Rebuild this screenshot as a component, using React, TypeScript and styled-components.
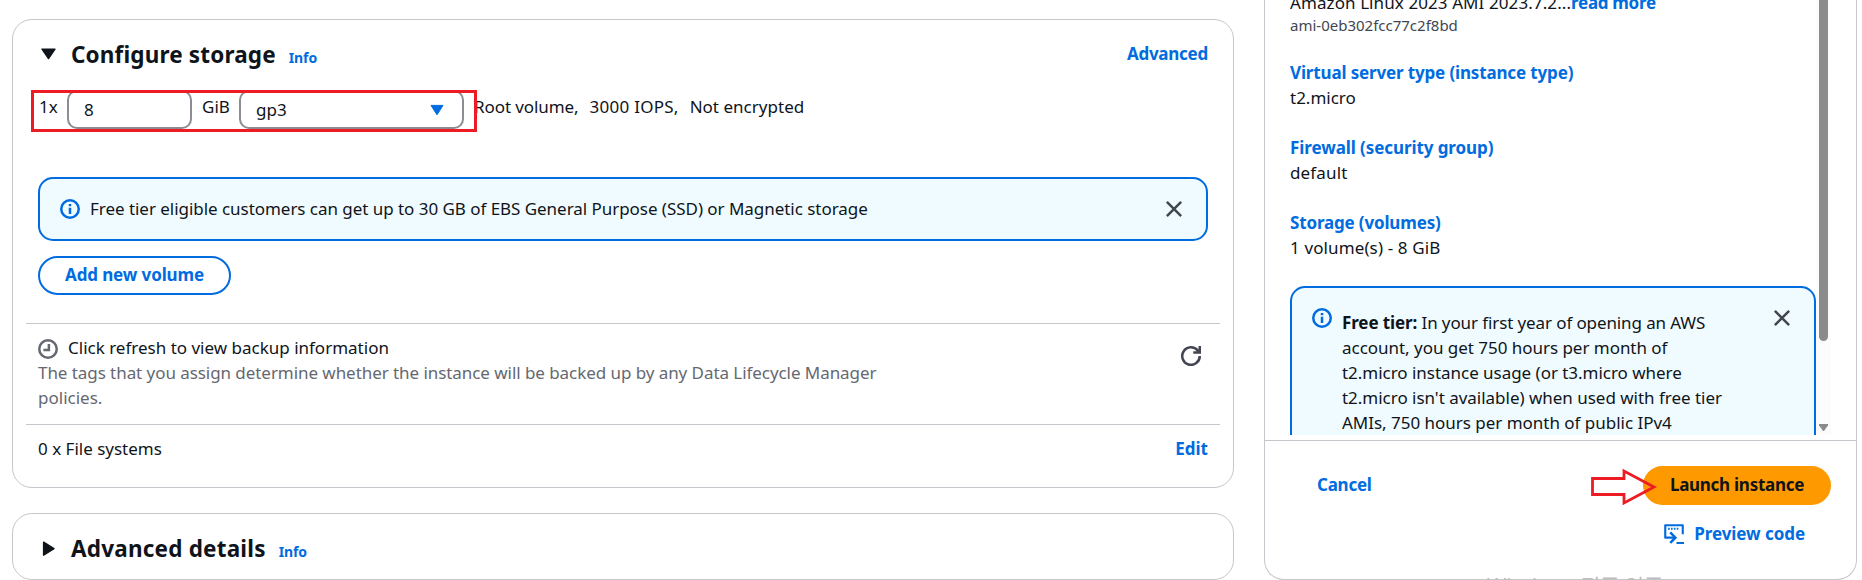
import React from "react";
import styled, { createGlobalStyle } from "styled-components";

const color = {
  text: "#0f141a",
  secondary: "#656871",
  muted: "#424650",
  link: "#006ce0",
  border: "#c6c6cd",
  field: "#8c8c94",
  infoBg: "#f0fbff",
  primary: "#ff9900",
  mark: "#ed1c24",
};

const GlobalStyle = createGlobalStyle`
  *, *::before, *::after { box-sizing: border-box; }
  body {
    margin: 0;
    background: #fff;
    color: ${color.text};
    font: 400 17px/25px "Noto Sans", "Noto Sans CJK KR", sans-serif;
  }
`;

const Page = styled.div`
  position: relative;
  display: flex;
  gap: 30px;
  width: 1862px;
  height: 580px;
  padding-left: 12px;
  overflow: hidden;
`;

const MainColumn = styled.main`
  display: flex;
  flex-direction: column;
  gap: 25px;
  width: 1222px;
  padding-top: 19px;
`;

const Card = styled.section<{ $height: number }>`
  flex: none;
  height: ${(p) => p.$height}px;
  padding: 19px 25px 0;
  border: 1px solid ${color.border};
  border-radius: 20px;
  background: #fff;
`;

const CardHeader = styled.header`
  display: flex;
  align-items: center;
  height: 30px;
`;

const HeaderIcon = styled.svg`
  flex: none;
  width: 20px;
  height: 20px;
  margin-right: 13px;
  fill: ${color.text};
  stroke: ${color.text};
  stroke-width: 1.4;
  stroke-linejoin: round;
`;

const Title = styled.h2<{ $track?: number }>`
  margin: 0;
  padding-top: 2px;
  font-size: 22.5px;
  font-weight: 700;
  line-height: 30px;
  letter-spacing: ${(p) => p.$track ?? 0}px;
`;

const InfoLink = styled.a`
  margin: 8px 0 0 13px;
  color: ${color.link};
  font-size: 14px;
  font-weight: 700;
  line-height: 20px;
  letter-spacing: -0.1px;
`;

const Text = styled.span<{ $track?: number }>`
  white-space: pre;
  letter-spacing: ${(p) => p.$track ?? 0}px;
`;

const Link = styled.a<{ $track?: number }>`
  color: ${color.link};
  font-weight: 700;
  white-space: nowrap;
  letter-spacing: ${(p) => p.$track ?? 0}px;
`;

const HeaderAction = styled(Link)`
  margin-left: auto;
  padding-bottom: 2px;
`;

const VolumeRow = styled.div`
  position: relative;
  display: flex;
  align-items: flex-start;
  height: 39px;
  margin-top: 21px;
`;

const VolumeLabel = styled.span<{ $width: number; $indent?: number }>`
  width: ${(p) => p.$width}px;
  padding: 4px 0 0 ${(p) => p.$indent ?? 0}px;
`;

const Field = styled.div<{ $width: number }>`
  display: flex;
  align-items: center;
  justify-content: space-between;
  width: ${(p) => p.$width}px;
  height: 39px;
  padding: 0 18px 0 15px;
  border: 2px solid ${color.field};
  border-radius: 10px;
`;

const Caret = styled.svg`
  width: 14px;
  height: 12px;
  fill: ${color.link};
  stroke: ${color.link};
  stroke-width: 1;
  stroke-linejoin: round;
`;

const VolumeFacts = styled.div`
  display: flex;
  gap: 11px;
  padding: 4px 0 0 10px;
`;

const Highlight = styled.div`
  position: absolute;
  top: 0;
  left: -7px;
  width: 446px;
  height: 42px;
  border: 3px solid ${color.mark};
`;

const Alert = styled.div`
  display: flex;
  align-items: center;
  gap: 10px;
  height: 64px;
  margin-top: 48px;
  padding: 0 22px 0 20px;
  border: 2px solid ${color.link};
  border-radius: 15px;
  background: ${color.infoBg};
`;

const SummaryAlert = styled(Alert)`
  flex: none;
  align-items: flex-start;
  height: 260px;
  margin-top: 26px;
  padding-top: 20px;
`;

const AlertBody = styled.div`
  flex: 1;
  padding-bottom: 2px;
`;

const SummaryAlertBody = styled(AlertBody)`
  display: flex;
  flex-direction: column;
  padding-top: 2px;
`;

const Icon = styled.svg<{ $color: string }>`
  flex: none;
  width: 20px;
  height: 20px;
  fill: none;
  stroke: ${(p) => p.$color};
  stroke-width: 2;
`;

const PillButton = styled.button<{ $primary?: boolean; $width: number; $track: number }>`
  width: ${(p) => p.$width}px;
  height: 39px;
  padding: 0 0 2px;
  border: 2px solid ${(p) => (p.$primary ? color.primary : color.link)};
  border-radius: 20px;
  background: ${(p) => (p.$primary ? color.primary : "#fff")};
  color: ${(p) => (p.$primary ? color.text : color.link)};
  font: inherit;
  font-weight: 700;
  letter-spacing: ${(p) => p.$track}px;
`;

const ButtonRow = styled.div`
  display: flex;
  margin-top: 15px;
`;

const Divider = styled.hr<{ $top: number }>`
  height: 1px;
  margin: ${(p) => p.$top}px -12px 11px;
  border: 0;
  background: ${color.border};
`;

const BackupRow = styled.div`
  display: flex;
  justify-content: space-between;
  padding-right: 7px;
`;

const BackupText = styled.div`
  display: flex;
  flex-direction: column;
  color: ${color.secondary};
`;

const BackupStatus = styled.div`
  display: flex;
  gap: 10px;
  color: ${color.text};

  ${Icon} {
    margin-top: 4px;
  }
`;

const RefreshButton = styled.span`
  padding-top: 11px;
  line-height: 0;
`;

const SplitRow = styled.div`
  display: flex;
  justify-content: space-between;
`;

const Panel = styled.aside`
  display: flex;
  flex-direction: column;
  width: 593px;
  height: 580px;
  border: 1px solid ${color.border};
  border-top: 0;
  border-radius: 0 0 20px 20px;
`;

const ScrollArea = styled.div`
  display: flex;
  height: 435px;
  padding: 0 25px;
  overflow: hidden;
`;

const Summary = styled.div`
  display: flex;
  flex-direction: column;
  width: 526px;
  margin-top: -10px;
`;

const SummaryItem = styled.div`
  display: flex;
  flex: none;
  flex-direction: column;
  margin-bottom: 25px;

  &:nth-last-child(2) {
    margin-bottom: 0;
  }
`;

const AmiId = styled.span`
  color: ${color.muted};
  font-size: 15px;
  line-height: 20px;
`;

const ScrollTrack = styled.div`
  display: flex;
  flex-direction: column;
  align-items: center;
  justify-content: space-between;
  width: 15px;
  height: 435px;
  background: #fcfcfc;
`;

const ScrollThumb = styled.div`
  width: 9px;
  height: 341px;
  border-radius: 0 0 5px 5px;
  background: #8b8b8b;
`;

const ScrollArrow = styled.svg`
  width: 9px;
  height: 7px;
  margin-bottom: 4px;
  fill: #8b8b8b;
`;

const Footer = styled.footer`
  display: flex;
  flex-direction: column;
  margin-top: 5px;
  padding: 25px 25px 0;
  border-top: 1px solid ${color.border};
`;

const FooterActions = styled.div`
  display: flex;
  align-items: center;
  justify-content: space-between;
  padding-left: 27px;

  > a {
    padding-bottom: 2px;
  }
`;

const PreviewLink = styled(Link)`
  display: flex;
  align-items: center;
  align-self: flex-end;
  gap: 10px;
  margin: 16px 26px 0 0;
`;

const ArrowMark = styled.svg`
  position: absolute;
  top: 465px;
  left: 1588px;
  width: 72px;
  height: 44px;
  fill: none;
  stroke: ${color.mark};
  stroke-width: 2.8;
`;

const Watermark = styled.div`
  position: absolute;
  top: 571px;
  left: 1487px;
  color: #bdbdbd;
  font: 400 21px/30px "Open Sans", "Noto Sans CJK KR", sans-serif;
  letter-spacing: -0.1px;
  white-space: nowrap;
`;

const InfoIcon = () => (
  <Icon viewBox="0 0 16 16" $color={color.link}>
    <circle cx="8" cy="8" r="7" />
    <path d="M8 4v1.8M8 7v4.9" />
  </Icon>
);

const CloseIcon = () => (
  <Icon viewBox="0 0 16 16" $color={color.muted}>
    <path d="M2.3 2.3l11.4 11.4M13.7 2.3L2.3 13.7" />
  </Icon>
);

const freeTierLines = [
  { text: "account, you get 750 hours per month of", track: -0.03 },
  { text: "t2.micro instance usage (or t3.micro where", track: -0.03 },
  { text: "t2.micro isn't available) when used with free tier", track: -0.02 },
  { text: "AMIs, 750 hours per month of public IPv4", track: -0.02 },
];

const summaryItems = [
  { label: "Virtual server type (instance type)", value: "t2.micro", labelTrack: -0.15, valueTrack: 0 },
  { label: "Firewall (security group)", value: "default", labelTrack: -0.08, valueTrack: 0.15 },
  { label: "Storage (volumes)", value: "1 volume(s) - 8 GiB", labelTrack: -0.16, valueTrack: 0.12 },
];

export default function App() {
  return (
    <>
      <GlobalStyle />
      <Page>
        <MainColumn>
          <Card $height={469}>
            <CardHeader>
              <HeaderIcon viewBox="0 0 20 20">
                <path d="M4 5.2h13L10.500 14.6z" />
              </HeaderIcon>
              <Title $track={0.15}>Configure storage</Title>
              <InfoLink>Info</InfoLink>
              <HeaderAction $track={-0.25}>Advanced</HeaderAction>
            </CardHeader>
            <VolumeRow>
              <VolumeLabel $width={29} $indent={1}>1x</VolumeLabel>
              <Field $width={125}>8</Field>
              <VolumeLabel $width={47} $indent={10}>GiB</VolumeLabel>
              <Field $width={225}>
                gp3
                <Caret viewBox="0 0 14 12">
                  <path d="M1 1.4h12L7 10.8z" />
                </Caret>
              </Field>
              <VolumeFacts>
                <Text $track={-0.08}>Root volume,</Text>
                <Text $track={0.25}>3000 IOPS,</Text>
                <Text $track={0.02}>Not encrypted</Text>
              </VolumeFacts>
              <Highlight />
            </VolumeRow>
            <Alert>
              <InfoIcon />
              <AlertBody>
                <Text $track={-0.04}>
                  Free tier eligible customers can get up to 30 GB of EBS General Purpose (SSD) or Magnetic storage
                </Text>
              </AlertBody>
              <CloseIcon />
            </Alert>
            <ButtonRow>
              <PillButton $width={193} $track={-0.12}>Add new volume</PillButton>
            </ButtonRow>
            <Divider $top={28} />
            <BackupRow>
              <BackupText>
                <BackupStatus>
                  <Icon viewBox="0 0 16 16" $color={color.secondary}>
                    <circle cx="8" cy="8" r="7" />
                    <path d="M8.7 4v4.8H4.3" />
                  </Icon>
                  <Text>Click refresh to view backup information</Text>
                </BackupStatus>
                <Text $track={-0.06}>
                  The tags that you assign determine whether the instance will be backed up by any Data Lifecycle Manager
                </Text>
                <Text>policies.</Text>
              </BackupText>
              <RefreshButton>
                <Icon viewBox="0 0 16 16" $color={color.muted}>
                  <path d="M15 8a7 7 0 1 1-1.6-4.4l1 1.2M9.8 5.1H15V0" />
                </Icon>
              </RefreshButton>
            </BackupRow>
            <Divider $top={14} />
            <SplitRow>
              <Text>0 x File systems</Text>
              <Link>Edit</Link>
            </SplitRow>
          </Card>
          <Card $height={67}>
            <CardHeader>
              <HeaderIcon viewBox="0 0 20 20">
                <path d="M5.6 4.2v13L16 10.7z" />
              </HeaderIcon>
              <Title $track={0.2}>Advanced details</Title>
              <InfoLink>Info</InfoLink>
            </CardHeader>
          </Card>
        </MainColumn>

        <Panel>
          <ScrollArea>
            <Summary>
              <SummaryItem>
                <div>
                  <Text $track={0.09}>Amazon Linux 2023 AMI 2023.7.2...</Text>
                  <Link $track={-0.3}>read more</Link>
                </div>
                <AmiId>ami-0eb302fcc77c2f8bd</AmiId>
              </SummaryItem>
              {summaryItems.map((item) => (
                <SummaryItem key={item.label}>
                  <Link $track={item.labelTrack}>{item.label}</Link>
                  <Text $track={item.valueTrack}>{item.value}</Text>
                </SummaryItem>
              ))}
              <SummaryAlert>
                <InfoIcon />
                <SummaryAlertBody>
                  <Text $track={-0.11}>
                    <strong>Free tier:</strong> In your first year of opening an AWS
                  </Text>
                  {freeTierLines.map((line) => (
                    <Text key={line.text} $track={line.track}>{line.text}</Text>
                  ))}
                </SummaryAlertBody>
                <CloseIcon />
              </SummaryAlert>
            </Summary>
            <ScrollTrack>
              <ScrollThumb />
              <ScrollArrow viewBox="0 0 9 7">
                <path d="M0 0h9v1.2L5 7H4L0 1.2z" />
              </ScrollArrow>
            </ScrollTrack>
          </ScrollArea>
          <Footer>
            <FooterActions>
              <Link $track={-0.25}>Cancel</Link>
              <PillButton $primary $width={188} $track={-0.27}>Launch instance</PillButton>
            </FooterActions>
            <PreviewLink $track={-0.06}>
              <Icon viewBox="0 0 16 16" $color={color.link}>
                <path d="M9 10.9H1V1h14v7.1" strokeWidth="1.7" strokeLinejoin="round" />
                <path d="M5 6.7l4.1 4.2L5 15.1" />
                <path d="M10 15.2h6" strokeWidth="1.6" />
                <path d="M3.3 3.8h8.2" strokeWidth="1.5" strokeDasharray="1.3 1" />
              </Icon>
              Preview code
            </PreviewLink>
          </Footer>
        </Panel>

        <ArrowMark viewBox="0 0 72 44">
          <path d="M4.5 13.5H36V6l30 16-30 16v-8.500H4.500z" />
        </ArrowMark>
        <Watermark>Windows 정품 인증</Watermark>
      </Page>
    </>
  );
}
